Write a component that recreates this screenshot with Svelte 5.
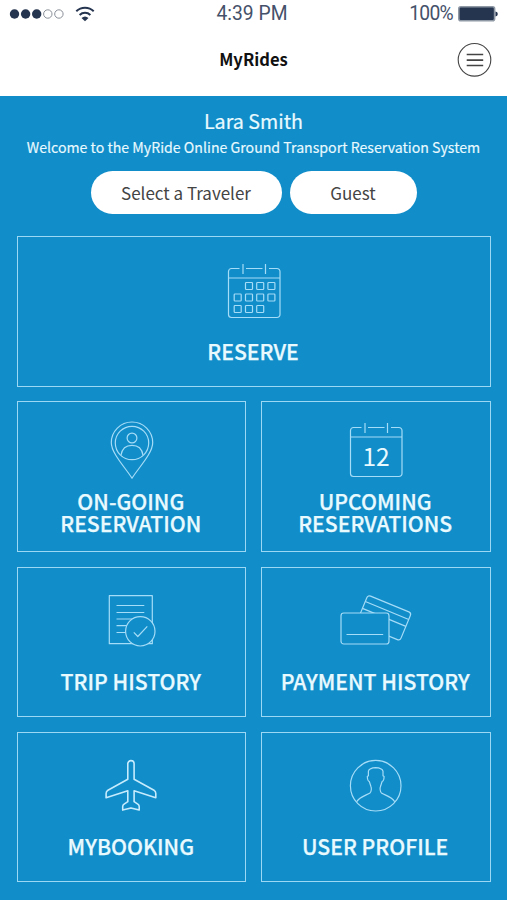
<script lang="ts">
  interface Tile {
    id: string;
    label: string;
    wide?: boolean;
    double?: boolean;
  }

  const tiles: Tile[] = [
    { id: "reserve", label: "RESERVE", wide: true },
    { id: "ongoing", label: "ON-GOING\nRESERVATION", double: true },
    { id: "upcoming", label: "UPCOMING\nRESERVATIONS", double: true },
    { id: "trips", label: "TRIP HISTORY" },
    { id: "payments", label: "PAYMENT HISTORY" },
    { id: "booking", label: "MYBOOKING" },
    { id: "profile", label: "USER PROFILE" },
  ];

  // day cells of the calendar icon, the first and last slots are blank
  const cells = [25, 36.5, 48].flatMap((y, r) =>
    [13.7, 25, 36.2, 47.4]
      .filter((_, c) => !(r === 0 && c === 0) && !(r === 2 && c === 3))
      .map((x) => ({ x, y }))
  );
</script>

{#snippet calendar()}
  <path d="M15.5 7.5H7.5a3 3 0 0 0-3 3v43a3 3 0 0 0 3 3h45.500a3 3 0 0 0 3-3v-43a3 3 0 0 0-3-3h-8M22 7.500h16.500M4.500 17h51.500M19 3v10M41.500 3v10" />
{/snippet}

<div class="phone">
  <div class="status">
    <div class="left">
      <svg class="signal" width="56" height="12" viewBox="0 0 56 12">
        {#each [0, 1, 2, 3, 4] as i (i)}
          <circle class:off={i > 2} cx={5.5 + i * 11.1} cy="6" r={i > 2 ? 4.2 : 4.7} />
        {/each}
      </svg>
      <svg class="wifi" width="20" height="16" viewBox="0 0 20 16">
        <path d="M1.300 5.300a12.500 12.500 0 0 1 17.400 0M4.600 8.900a8 8 0 0 1 10.800 0" />
        <path class="tip" d="M6.500 12a5.200 5.200 0 0 1 7 0L10 15.300z" />
      </svg>
    </div>
    <span class="time">4:39 PM</span>
    <div class="right">
      <span>100%</span>
      <svg width="40" height="16" viewBox="0 0 40 16">
        <rect x=".8" y=".8" width="35.800" height="14" rx="2" fill="#25344f" stroke="#8f98a5" stroke-width="1.600" />
        <path d="M37.500 5.500q2.300.3 2.300 2.500t-2.300 2.500z" fill="#25344f" />
      </svg>
    </div>
  </div>

  <header>
    <h1>MyRides</h1>
    <button class="menu" aria-label="Menu">
      <svg width="34" height="34" viewBox="0 0 34 34">
        <circle cx="16.500" cy="16.800" r="16.300" />
        <path class="bars" d="M8.700 11.500h16.500M8.700 17.100h16.500M8.700 22.500h16.500" />
      </svg>
    </button>
  </header>

  <main>
    <h2>Lara Smith</h2>
    <p class="welcome">Welcome to the MyRide Online Ground Transport Reservation System</p>
    <div class="pills">
      <button class="traveler">Select a Traveler</button>
      <button class="guest">Guest</button>
    </div>

    <div class="grid">
      {#each tiles as tile (tile.id)}
        <button class="tile" class:wide={tile.wide} class:double={tile.double}>
          <svg class="icon {tile.id}" width="60" height="60" viewBox="0 0 60 60">
            {#if tile.id === "reserve"}
              {@render calendar()}
              {#each cells as c}
                <rect x={c.x - 3.5} y={c.y - 3.5} width="7" height="7" rx="0.8" />
              {/each}
            {:else if tile.id === "ongoing"}
              <path d="M31 58.300C25.500 49 10.300 33.500 10.300 22.700a20.700 20.700 0 0 1 41.400 0C51.700 33.500 36.500 49 31 58.300z" />
              <circle cx="31" cy="23" r="16.700" />
              <circle cx="31" cy="18" r="4.900" />
              <path d="M20 35.200C21 28.500 25.500 25.300 31 25.300s10 3.200 11 9.900" />
            {:else if tile.id === "upcoming"}
              {@render calendar()}
              <text x="30" y="46" text-anchor="middle">12</text>
            {:else if tile.id === "trips"}
              <path d="M8.300 3.700h43v48h-43zM15.500 13.500h27.800M15.500 20.500h27.800M15.500 27h27.800M15.500 33.700H30M15.500 40.500H30" />
              <circle class="solid" cx="39.300" cy="39.300" r="14.700" />
              <path d="M32.800 40.300l4 4.200 9.500-10.200" />
            {:else if tile.id === "payments"}
              <g transform="translate(22 3) rotate(22.500)">
                <rect width="47" height="30" rx="2.800" />
                <path d="M0 7h47M0 14.500h47" />
              </g>
              <rect class="solid" x="-5" y="21" width="48" height="31" rx="2.800" />
              <path d="M.5 42.500h36.700" />
            {:else if tile.id === "booking"}
              <path d="M26.800 22.300V6.800a3.150 3.150 0 0 1 6.300 0V22.300L53 33.200q1.800 1.100 1.800 3.200v4.300L33.100 33.700V44.700l3.700 2.400q1.400.9 1.400 2.500V53.100l-8.250-2.200L21.700 53.100V49.600q0-1.600 1.400-2.500l3.700-2.400V33.700L5.100 40.700V36.400q0-2.100 1.800-3.200z" />
            {:else}
              <circle cx="29.700" cy="28.700" r="25.300" />
              <path d="M10.700 44.700C13.500 40 21 38 24 35.900 25.500 34.500 25.600 31 25 29.700L23.300 24.500Q21.500 24 21.300 19.500L22.400 18.700V14.200Q23.300 11 29.700 10.700 36 11 37 14.200V18.700L38.100 19.500Q38 24 36.100 24.500L34.400 29.700C33.800 31 34 34.500 35.400 35.900 38.400 38 46 40 48.700 44.700" />
            {/if}
          </svg>
          <span class="label">{tile.label}</span>
        </button>
      {/each}
    </div>
  </main>
</div>

<style>
  :global(body) {
    margin: 0;
    background: #118dc9;
  }
  .phone {
    width: 507px;
    height: 900px;
    display: flex;
    flex-direction: column;
    overflow: hidden;
    background: #fff;
    font-family: "Noto Sans CJK SC", "Noto Sans", sans-serif;
  }
  button {
    margin: 0;
    padding: 0;
    border: 0;
    background: none;
    font: inherit;
    color: inherit;
  }
  .status {
    height: 27px;
    padding: 1px 9px 0 9px;
    display: grid;
    grid-template-columns: 1fr auto 1fr;
    align-items: center;
    box-sizing: border-box;
    font-family: Roboto, sans-serif;
    font-size: 19.3px;
    line-height: 26px;
    color: #45516a;
  }
  .left,
  .right {
    display: flex;
    align-items: center;
  }
  .left {
    gap: 10px;
  }
  .right {
    justify-content: flex-end;
    gap: 5px;
  }
  .time {
    margin-right: 3px;
  }
  .right span {
    letter-spacing: -0.7px;
  }
  .signal circle {
    fill: #25344f;
  }
  .signal circle.off {
    fill: none;
    stroke: #8a8f98;
    stroke-width: 1;
  }
  .wifi path {
    fill: none;
    stroke: #25344f;
    stroke-width: 2;
  }
  .wifi .tip {
    fill: #25344f;
    stroke: none;
  }
  header {
    height: 69px;
    padding: 0 15px 0 49px;
    display: flex;
    align-items: center;
    box-sizing: border-box;
  }
  h1 {
    flex: 1;
    margin: 0 0 5px;
    text-align: center;
    font-size: 16.6px;
    line-height: 24px;
    font-weight: 700;
    color: #111;
  }
  .menu {
    height: 34px;
    margin-bottom: 4px;
  }
  .menu svg {
    display: block;
    overflow: visible;
    fill: none;
    stroke: #444;
    stroke-width: 1.1;
  }
  .menu .bars {
    stroke-width: 1.6;
  }
  main {
    flex: 1;
    padding: 11px 16.5px 0;
    background: #118dc9;
    color: #e9faff;
    text-align: center;
  }
  h2 {
    margin: 0;
    font-size: 19.7px;
    line-height: 28px;
    font-weight: 400;
    -webkit-text-stroke: 0.2px;
  }
  .welcome {
    margin: 1px 0 0;
    font-size: 14.15px;
    line-height: 22px;
    white-space: nowrap;
    -webkit-text-stroke: 0.15px;
  }
  .pills {
    display: flex;
    justify-content: center;
    gap: 8px;
    margin-top: 13px;
  }
  .pills button {
    height: 43px;
    border-radius: 22px;
    background: #fff;
    color: #444;
    font-size: 17px;
    line-height: 42px;
  }
  .traveler {
    width: 191px;
  }
  .guest {
    width: 127px;
  }
  .grid {
    margin-top: 22px;
    display: grid;
    grid-template-columns: 1fr 1fr;
    grid-auto-rows: 150.5px;
    gap: 14.8px;
  }
  .tile {
    display: flex;
    flex-direction: column;
    align-items: center;
    box-sizing: border-box;
    padding-top: 24px;
    border: 1px solid #9cd8f4;
  }
  .tile.wide {
    grid-column: span 2;
  }
  .tile.double {
    padding-top: 17.5px;
  }
  .icon {
    flex: none;
    overflow: visible;
    fill: none;
    stroke: #a5dcf7;
    stroke-width: 1.2;
    stroke-linejoin: round;
  }
  .icon .solid {
    fill: #118dc9;
  }
  .icon.booking {
    stroke: #c5ebfc;
    stroke-width: 1.6;
  }
  .icon text {
    fill: #e9faff;
    stroke: none;
    font-size: 24.5px;
    font-weight: 400;
  }
  .label {
    margin-top: 18.5px;
    padding-right: 1px;
    font-size: 21.2px;
    line-height: 22px;
    font-weight: 500;
    white-space: pre;
    -webkit-text-stroke: 0.25px;
  }
  .double .label {
    margin-top: 10px;
  }
</style>
